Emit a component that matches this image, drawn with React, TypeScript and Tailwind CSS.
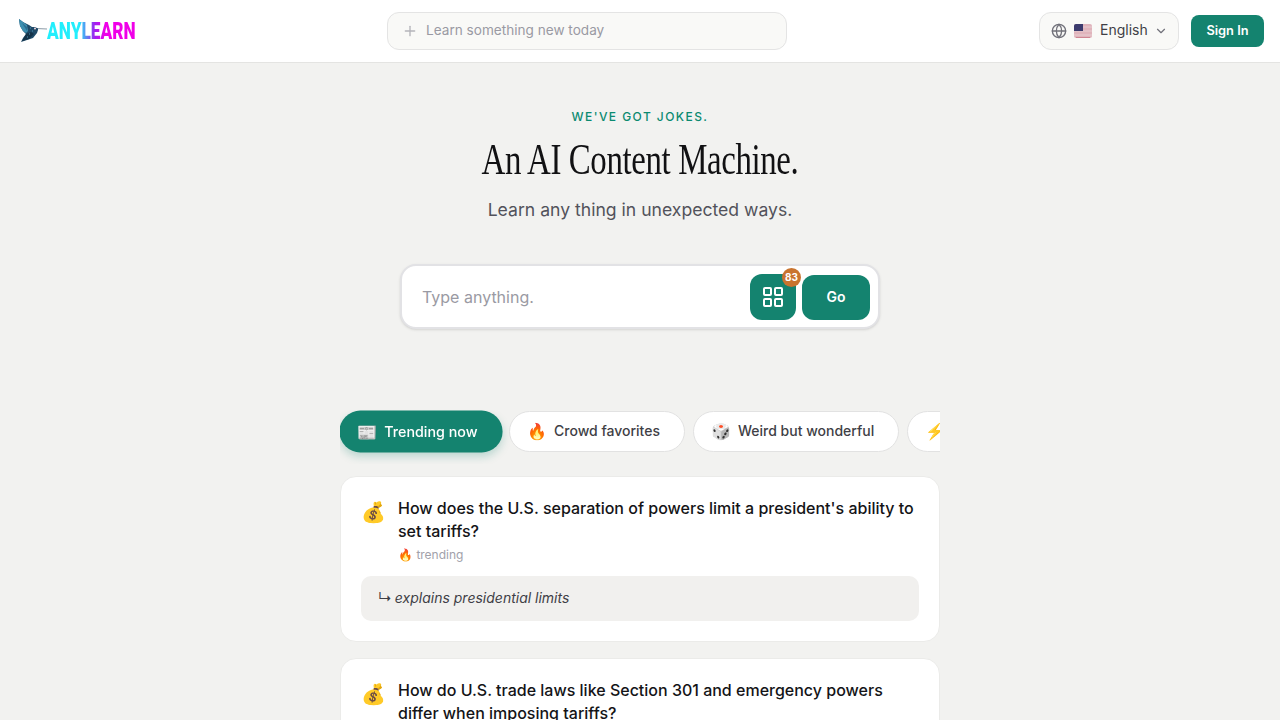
import { Globe, ChevronDown, Plus, LayoutGrid } from "lucide-react";

const Bird = () => (
  <svg width="29" height="24" viewBox="0 0 29 24" className="shrink-0">
    <path d="M18 9.5 L29 10" stroke="#8a9aa6" strokeWidth="1" fill="none" />
    <path d="M1 0 L5 3 L11 6 L14 8 L17 8 L20 9.5 L20 11 L19 14 L15 19 L9 21 L3 23 L5 19 L8 15 L5 12 L2 7 Z" fill="#1f4a68" />
    <path d="M1 0 L5 3 L9 6 L10 12 L8 14 L5 12 L2 7 Z" fill="#3d8fb0" />
    <path d="M4 4 L9 8 L9 12 Z" fill="#2a6d92" />
    <path d="M8 15 L13 13 L16 15 L11 20 L4 22 Z" fill="#143349" />
    <circle cx="17" cy="9.5" r="1" fill="#f3d9e0" />
    <path d="M12 9h1M14 12h1M11 15h1M9 18h1" stroke="#4f93b5" strokeWidth="1" />
  </svg>
);

const Flag = () => (
  <svg width="18" height="14" viewBox="0 0 18 14" className="shrink-0">
    <rect width="18" height="14" rx="2" fill="#e0b4bc" />
    <path d="M0 3h18M0 7h18M0 11h18" stroke="#e8cdd2" strokeWidth="1" />
    <path d="M2 13.5h14" stroke="#cf8492" strokeWidth="1" />
    <path d="M2 0h7v7H0V2a2 2 0 0 1 2-2z" fill="#3c3b6e" />
  </svg>
);

const Chip = ({ emoji, label, active }: { emoji: string; label: string; active?: boolean }) => (
  <div
    className={
      active
        ? "ml-[1px] flex h-[41px] w-[160px] shrink-0 scale-[1.02] items-center gap-2 rounded-full bg-[#14836f] pl-[17px] text-sm font-medium text-white shadow-[0_4px_8px_rgba(20,131,111,0.25)]"
        : "flex h-[41px] shrink-0 items-center gap-2 rounded-full border border-[#e2e2e2] bg-white pr-[24px] pl-[17px] text-sm font-medium text-[#3f3f46]"
    }
  >
    <span className="w-[19px] shrink-0 text-base leading-none">{emoji}</span>
    <span>{label}</span>
  </div>
);

const Card = ({ title, sub, note }: { title: string; sub?: string; note?: string }) => (
  <div className="shrink-0 rounded-2xl border border-[#ebebe9] bg-white px-5 pt-5 pb-5">
    <div className="flex gap-[14px]">
      <span className="w-[23px] shrink-0 pt-[1px] text-[20px] leading-[28px]">💰</span>
      <div className="min-w-0">
        <div className="text-base leading-[23px] font-medium text-[#141417]">{title}</div>
        {sub && <div className="mt-[4px] text-xs leading-[16px] text-[#a1a1aa]">🔥 {sub}</div>}
      </div>
    </div>
    {note && (
      <div className="mt-[13px] flex h-[45px] items-center gap-[3px] rounded-[10px] bg-[#f1f0ee] px-[17px] pb-[2px] text-sm text-[#3f3f46]">
        <span>↳</span>
        <span className="italic">{note}</span>
      </div>
    )}
  </div>
);

export default function App() {
  return (
    <div className="flex h-screen flex-col overflow-hidden bg-[#f2f2f0] font-['Inter',sans-serif]">
      <header className="flex h-[63px] shrink-0 items-center justify-between border-b border-[#e4e4e2] bg-white pr-4 pl-[18px]">
        <div className="flex w-[117px] items-center">
          <Bird />
          <span className="translate-y-[1px] origin-left scale-x-[0.75] bg-[linear-gradient(90deg,#22eefc_0%,#22eefc_36%,#5a8cf0_44%,#a020f0_54%,#f000e8_66%)] bg-clip-text font-['Roboto',sans-serif] text-[23px] font-black whitespace-nowrap text-transparent">
            ANYLEARN
          </span>
        </div>
        <div className="flex h-[38px] w-[400px] items-center gap-2 rounded-xl border border-[#e4e4e4] bg-[#f9f9f7] pl-[14px] text-[13.6px] text-[#9a9aa3]">
          <Plus size={16} className="text-[#b4b4ba]" />
          <span className="-translate-y-[1px]">Learn something new today</span>
        </div>
        <div className="flex items-center gap-3">
          <div className="flex h-[38px] w-[140px] items-center rounded-xl border border-[#e4e4e4] bg-[#f9f9f7] pl-[11px] text-sm text-[#3f3f46]">
            <Globe size={16} className="text-[#71717a]" />
            <span className="ml-[7px]"><Flag /></span>
            <span className="ml-2 -translate-y-[1px]">English</span>
            <ChevronDown size={14} className="ml-[6px] text-[#71717a]" />
          </div>
          <div className="flex h-8 w-[73px] items-center justify-center rounded-lg bg-[#14836f] text-[12.8px] font-semibold text-white">
            Sign In
          </div>
        </div>
      </header>

      <main className="flex flex-col items-center">
        <div className="mt-[47px] text-xs leading-[14px] font-medium tracking-[0.12em] text-[#0b8a70]">WE'VE GOT JOKES.</div>
        <h1 className="mt-[11px] scale-x-[0.73] font-['Liberation_Serif',serif] text-[45px] leading-[48px] tracking-[-0.5px] whitespace-nowrap text-[#111113]">
          An AI Content Machine.
        </h1>
        <div className="mt-[15px] text-[17.6px] leading-[24px] text-[#52525b]">Learn any thing in unexpected ways.</div>

        <div className="mt-[42px] flex h-[65px] w-[480px] items-center rounded-2xl border-2 border-[#e2e2e5] bg-white pr-[8px] pl-5 shadow-sm">
          <span className="flex-1 text-base text-[#9a9aa3]">Type anything.</span>
          <div className="relative flex h-[46px] w-[46px] items-center justify-center rounded-xl bg-[#14836f] text-white">
            <LayoutGrid size={24} />
            <span className="absolute -top-[6px] -right-[5px] flex h-[19px] w-[19px] items-center justify-center rounded-full bg-[#c9742f] text-[10px] font-bold text-white">83</span>
          </div>
          <div className="mt-[1px] ml-[6px] flex h-[45px] w-[68px] items-center justify-center rounded-xl bg-[#14836f] text-sm font-semibold text-white">Go</div>
        </div>

        <div className="mt-[80.5px] flex w-[600px] gap-2 overflow-hidden pt-[1px] pb-[12px]">
          <Chip emoji="📰" label="Trending now" active />
          <Chip emoji="🔥" label="Crowd favorites" />
          <Chip emoji="🎲" label="Weird but wonderful" />
          <Chip emoji="⚡" label="Quick wins" />
        </div>

        <div className="mt-[12.5px] flex w-[600px] flex-col gap-4">
          <Card
            title="How does the U.S. separation of powers limit a president's ability to set tariffs?"
            sub="trending"
            note="explains presidential limits"
          />
          <Card title="How do U.S. trade laws like Section 301 and emergency powers differ when imposing tariffs?" sub="trending" />
        </div>
      </main>
    </div>
  );
}
